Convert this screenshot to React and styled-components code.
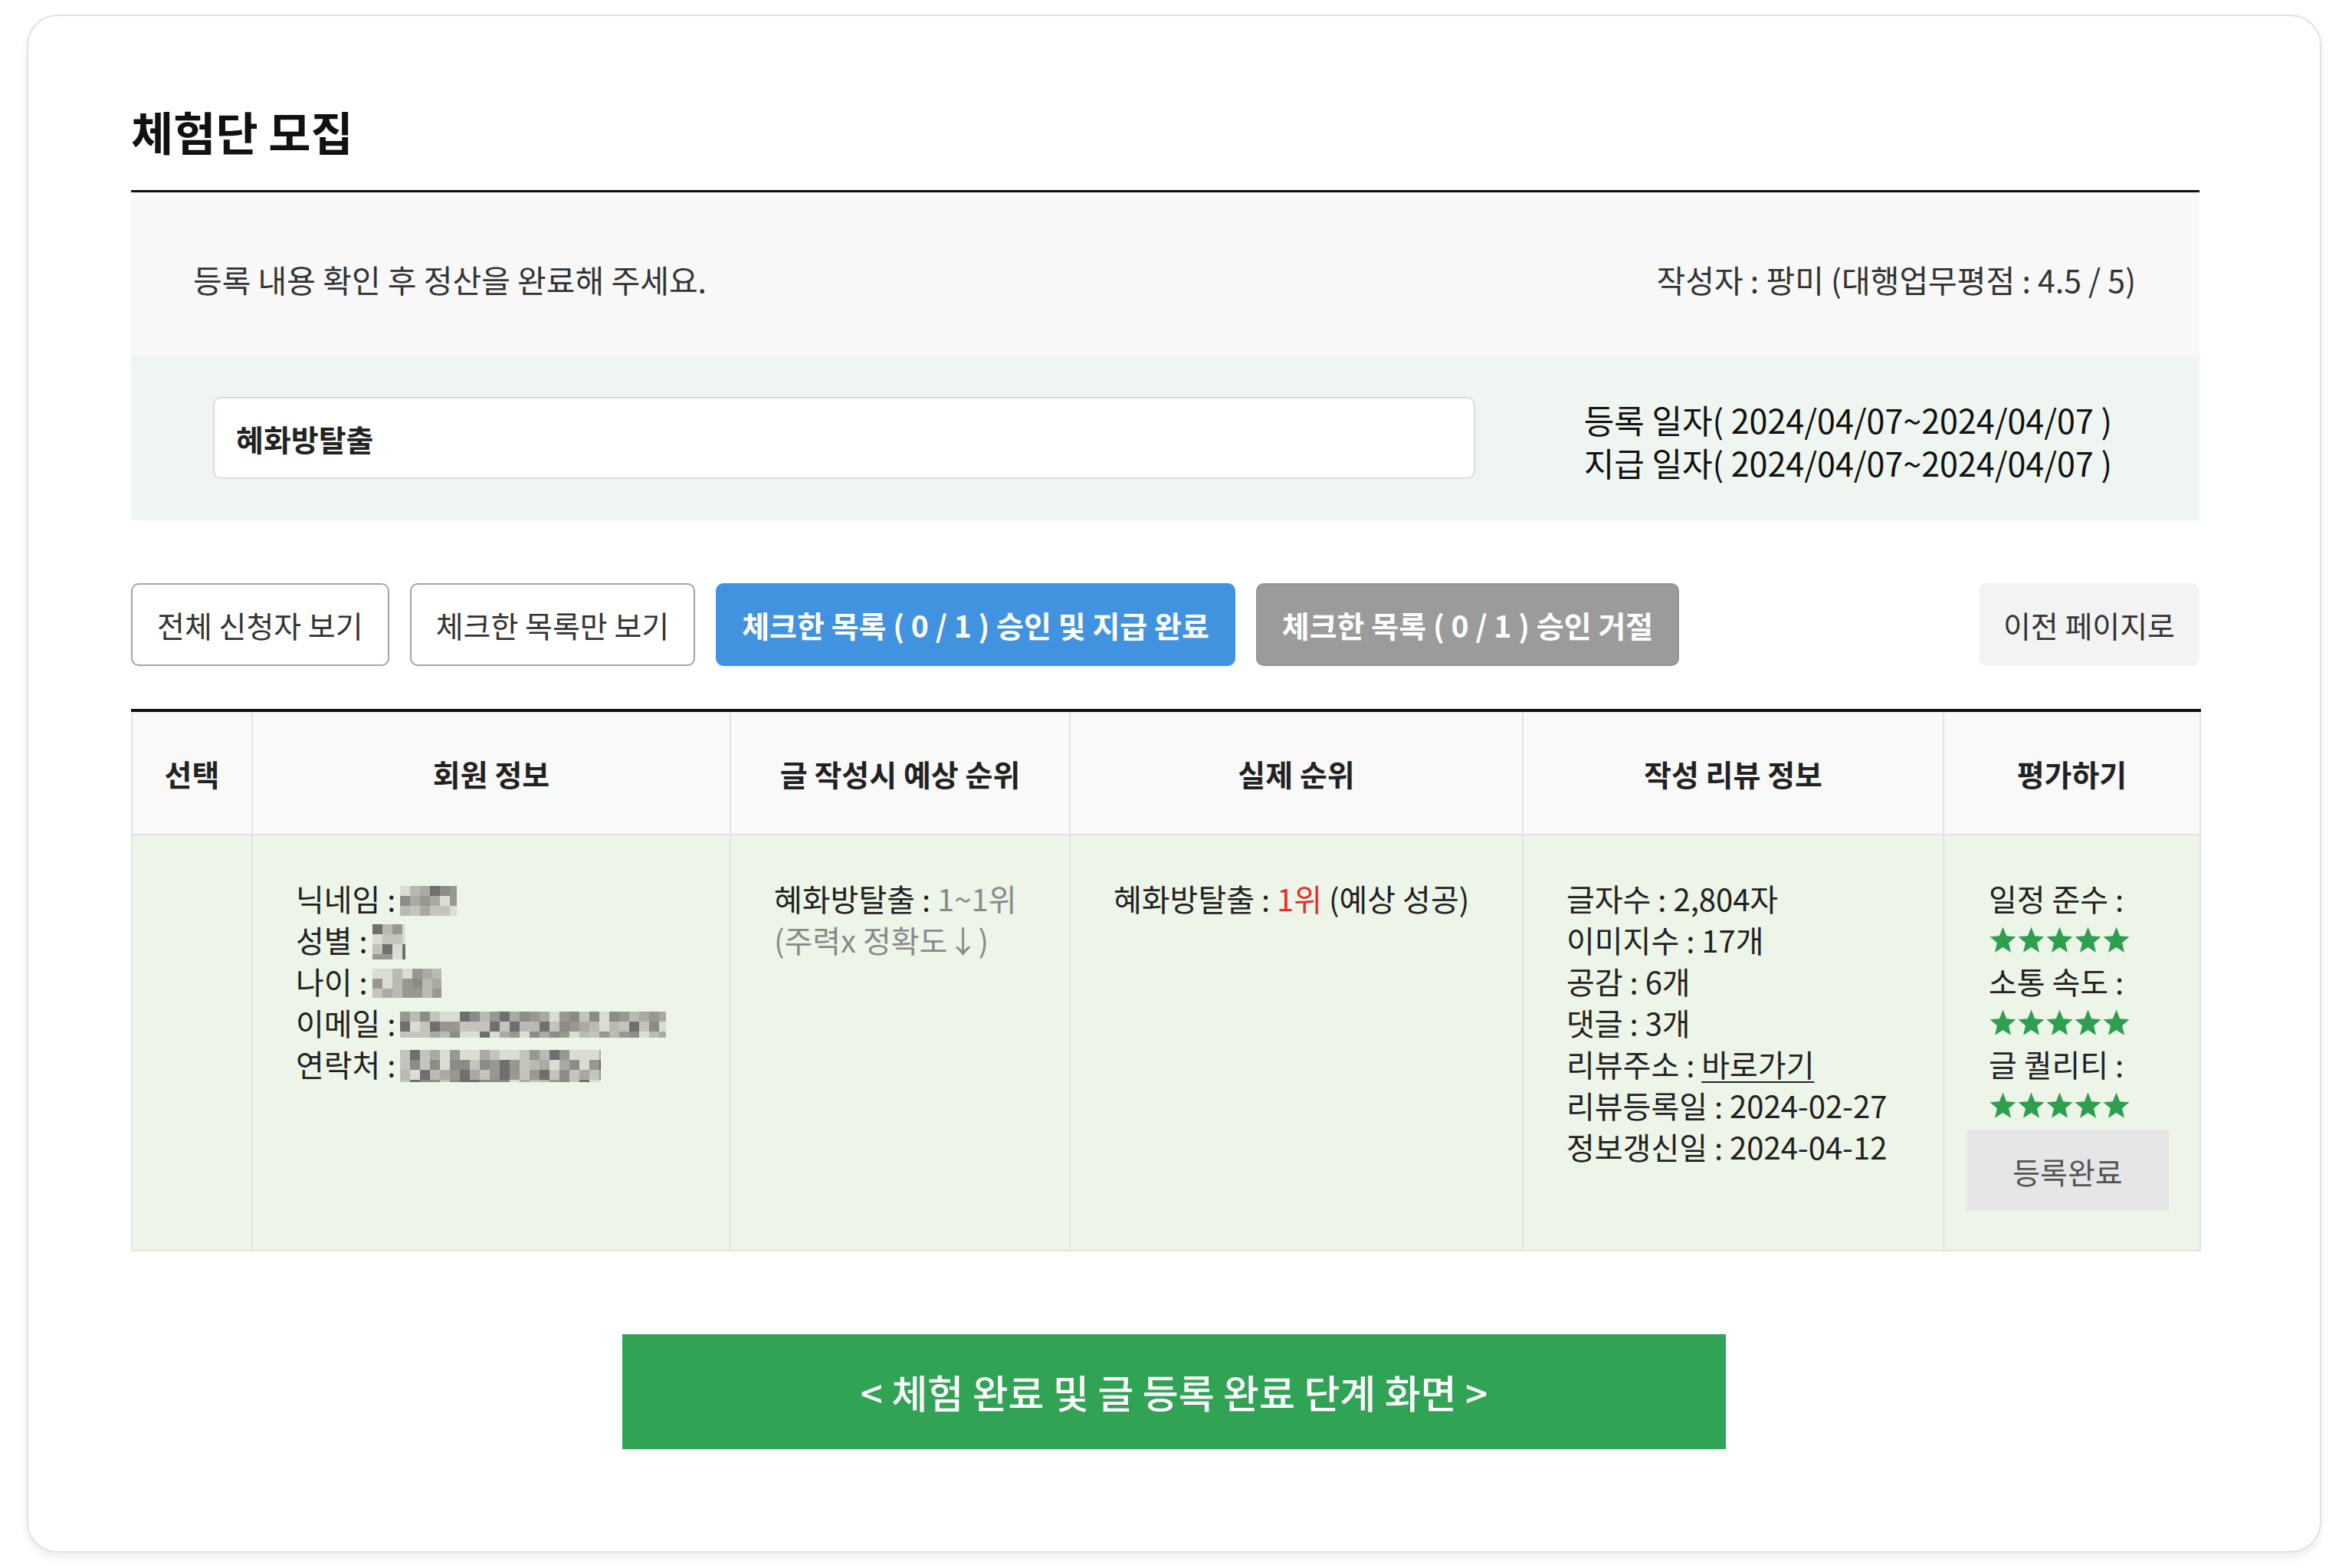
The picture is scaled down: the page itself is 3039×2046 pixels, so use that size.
import React from "react";
import styled, { createGlobalStyle } from "styled-components";

const GlobalStyle = createGlobalStyle`
  html, body {
    margin: 0;
    padding: 0;
    background: #fff;
  }
  body {
    font-family: "Noto Sans CJK KR", "Noto Sans", sans-serif;
    color: #222;
  }
  * {
    box-sizing: border-box;
  }
`;

const Page = styled.div`
  padding: 19px 10px 20px 35px;
`;

const Card = styled.section`
  width: 2994px;
  border: 2px solid #e2e2e2;
  border-radius: 40px;
  box-shadow: 0 6px 12px rgba(0, 0, 0, 0.07);
  padding: 116px 157px 133px 134px;
  background: #fff;
`;

const Title = styled.h1`
  margin: 0;
  font-size: 60px;
  line-height: 67px;
  font-weight: 700;
  color: #111;
  padding-bottom: 44px;
  border-bottom: 3px solid #111;
`;

const Notice = styled.div`
  height: 213px;
  background: #f8f8f8;
  padding: 12px 83px 0 81px;
  display: flex;
  align-items: center;
  justify-content: space-between;
  font-size: 41px;
  color: #333;
`;

const SearchBand = styled.div`
  height: 215px;
  background: #eff6f1;
  padding: 0 114px 0 107px;
  display: flex;
  align-items: center;
  justify-content: space-between;
`;

const SearchBox = styled.div`
  width: 1647px;
  height: 107px;
  background: #fff;
  border: 2px solid #dcdcdc;
  border-radius: 10px;
  padding: 0 28px;
  display: flex;
  align-items: center;
  font-size: 39px;
  font-weight: 700;
  color: #222;
`;

const Dates = styled.div`
  font-size: 43px;
  line-height: 56px;
  color: #111;
  padding-top: 6px;
`;

const Toolbar = styled.div`
  margin-top: 82px;
  display: flex;
  gap: 27px;
`;

const variants = {
  outline: "background:#fff;border:2px solid #a3a3a3;color:#333;font-weight:400;",
  primary: "background:#4193e0;border:2px solid #4193e0;color:#fff;font-weight:700;",
  muted: "background:#9b9b9b;border:2px solid #949494;color:#fff;font-weight:700;",
  ghost: "background:#f3f3f3;border:2px solid #f3f3f3;color:#333;font-weight:400;margin-left:auto;",
};

const Button = styled.button`
  height: 108px;
  padding: 0 ${(p) => p.$px || 32}px;
  border-radius: 10px;
  font-family: inherit;
  font-size: 39px;
  cursor: pointer;
  white-space: nowrap;
  ${(p) => variants[p.$variant]}
`;

const Table = styled.table`
  width: 100%;
  margin-top: 56px;
  border-collapse: collapse;
  table-layout: fixed;
  border-top: 4px solid #111;
`;

const Col = styled.col`
  width: ${(p) => p.$w}px;
`;

const Th = styled.th`
  height: 162px;
  background: #f9f9f9;
  font-size: 39px;
  font-weight: 700;
  color: #222;
  border: 2px solid #e3e3e3;
  border-top: none;
`;

const Td = styled.td`
  height: 543px;
  vertical-align: top;
  background: #edf5e8;
  padding: ${(p) => (p.$eval ? "55px 42px 0 29px" : "55px 20px 0 56px")};
  border: 2px solid #e3e3e3;
  font-size: 40px;
  line-height: 54px;
  color: #222;
`;

const Line = styled.div`
  white-space: nowrap;
  padding-left: ${(p) => p.$indent || 0}px;
`;

const Soft = styled.span`
  color: #8a8a8a;
`;

const Red = styled.span`
  color: #e3302b;
`;

const Link = styled.a`
  color: #222;
  text-decoration: underline;
  text-underline-offset: 6px;
  text-decoration-thickness: 2px;
`;

const MosaicSvg = styled.svg`
  vertical-align: middle;
  margin-left: 6px;
  margin-top: -6px;
`;

const Stars = styled.div`
  height: 54px;
  display: flex;
  align-items: center;
  padding-left: 29px;
`;

const DoneButton = styled.button`
  display: block;
  width: 264px;
  height: 105px;
  margin-top: 6px;
  background: #e6e6e6;
  border: none;
  font-family: inherit;
  font-size: 39px;
  color: #555;
`;

const Footer = styled.div`
  margin-top: 108px;
  padding-left: 23px;
  display: flex;
  justify-content: center;
`;

const BigButton = styled.button`
  width: 1440px;
  height: 150px;
  background: #31a354;
  border: none;
  color: #fff;
  font-family: inherit;
  font-size: 51px;
  font-weight: 500;
`;

const shades = ["#6f6f6f", "#8c8c86", "#a9aaa3", "#c3c5bd", "#d9ddd2", "#989890", "#b8bbb2"];

function Mosaic({ w, h, seed }) {
  const size = 13;
  const cols = Math.ceil(w / size);
  const rows = Math.ceil(h / size);
  let s = seed;
  const rnd = () => {
    s = (s * 9301 + 49297) % 233280;
    return s / 233280;
  };
  const rects = [];
  for (let r = 0; r < rows; r++) {
    for (let c = 0; c < cols; c++) {
      rects.push(
        <rect
          key={r + "-" + c}
          x={c * size}
          y={r * size}
          width={size}
          height={size}
          fill={shades[Math.floor(rnd() * shades.length)]}
        />
      );
    }
  }
  return (
    <MosaicSvg width={w} height={h} viewBox={`0 0 ${w} ${h}`} shapeRendering="crispEdges">
      {rects}
    </MosaicSvg>
  );
}

function Star() {
  return (
    <svg width="37" height="37" viewBox="0 0 24 24">
      <polygon
        fill="#2e9e4f"
        points="12,1 15,8.6 23,9.2 16.9,14.4 18.8,22.6 12,18.2 5.2,22.6 7.1,14.4 1,9.2 9,8.6"
      />
    </svg>
  );
}

function StarRow() {
  return (
    <Stars>
      {[0, 1, 2, 3, 4].map((i) => (
        <Star key={i} />
      ))}
    </Stars>
  );
}

const columns = [
  { w: 157, label: "선택" },
  { w: 624, label: "회원 정보" },
  { w: 443, label: "글 작성시 예상 순위" },
  { w: 591, label: "실제 순위" },
  { w: 549, label: "작성 리뷰 정보" },
  { w: 335, label: "평가하기" },
];

export default function App() {
  return (
    <>
      <GlobalStyle />
      <Page>
        <Card>
          <Title>체험단 모집</Title>
          <Notice>
            <span>등록 내용 확인 후 정산을 완료해 주세요.</span>
            <span>작성자 : 팡미 (대행업무평점 : 4.5 / 5)</span>
          </Notice>
          <SearchBand>
            <SearchBox>혜화방탈출</SearchBox>
            <Dates>
              <div>등록 일자( 2024/04/07~2024/04/07 )</div>
              <div>지급 일자( 2024/04/07~2024/04/07 )</div>
            </Dates>
          </SearchBand>

          <Toolbar>
            <Button $variant="outline">전체 신청자 보기</Button>
            <Button $variant="outline">체크한 목록만 보기</Button>
            <Button $variant="primary">체크한 목록 ( 0 / 1 ) 승인 및 지급 완료</Button>
            <Button $variant="muted">체크한 목록 ( 0 / 1 ) 승인 거절</Button>
            <Button $variant="ghost" $px={30}>이전 페이지로</Button>
          </Toolbar>

          <Table>
            <colgroup>
              {columns.map((c) => (
                <Col key={c.label} $w={c.w} />
              ))}
            </colgroup>
            <thead>
              <tr>
                {columns.map((c) => (
                  <Th key={c.label}>{c.label}</Th>
                ))}
              </tr>
            </thead>
            <tbody>
              <tr>
                <Td />
                <Td>
                  <Line>닉네임 :<Mosaic w={74} h={39} seed={11} /></Line>
                  <Line>성별 :<Mosaic w={43} h={46} seed={23} /></Line>
                  <Line>나이 :<Mosaic w={90} h={38} seed={37} /></Line>
                  <Line>이메일 :<Mosaic w={347} h={34} seed={41} /></Line>
                  <Line>연락처 :<Mosaic w={262} h={42} seed={59} /></Line>
                </Td>
                <Td>
                  <Line>
                    혜화방탈출 : <Soft>1~1위</Soft>
                  </Line>
                  <Line>
                    <Soft>(주력x 정확도↓)</Soft>
                  </Line>
                </Td>
                <Td>
                  <Line>
                    혜화방탈출 : <Red>1위</Red> (예상 성공)
                  </Line>
                </Td>
                <Td>
                  <Line>글자수 : 2,804자</Line>
                  <Line>이미지수 : 17개</Line>
                  <Line>공감 : 6개</Line>
                  <Line>댓글 : 3개</Line>
                  <Line>
                    리뷰주소 : <Link>바로가기</Link>
                  </Line>
                  <Line>리뷰등록일 : 2024-02-27</Line>
                  <Line>정보갱신일 : 2024-04-12</Line>
                </Td>
                <Td $eval>
                  <Line $indent={29}>일정 준수 :</Line>
                  <StarRow />
                  <Line $indent={29}>소통 속도 :</Line>
                  <StarRow />
                  <Line $indent={29}>글 퀄리티 :</Line>
                  <StarRow />
                  <DoneButton>등록완료</DoneButton>
                </Td>
              </tr>
            </tbody>
          </Table>

          <Footer>
            <BigButton>&lt; 체험 완료 및 글 등록 완료 단계 화면 &gt;</BigButton>
          </Footer>
        </Card>
      </Page>
    </>
  );
}
